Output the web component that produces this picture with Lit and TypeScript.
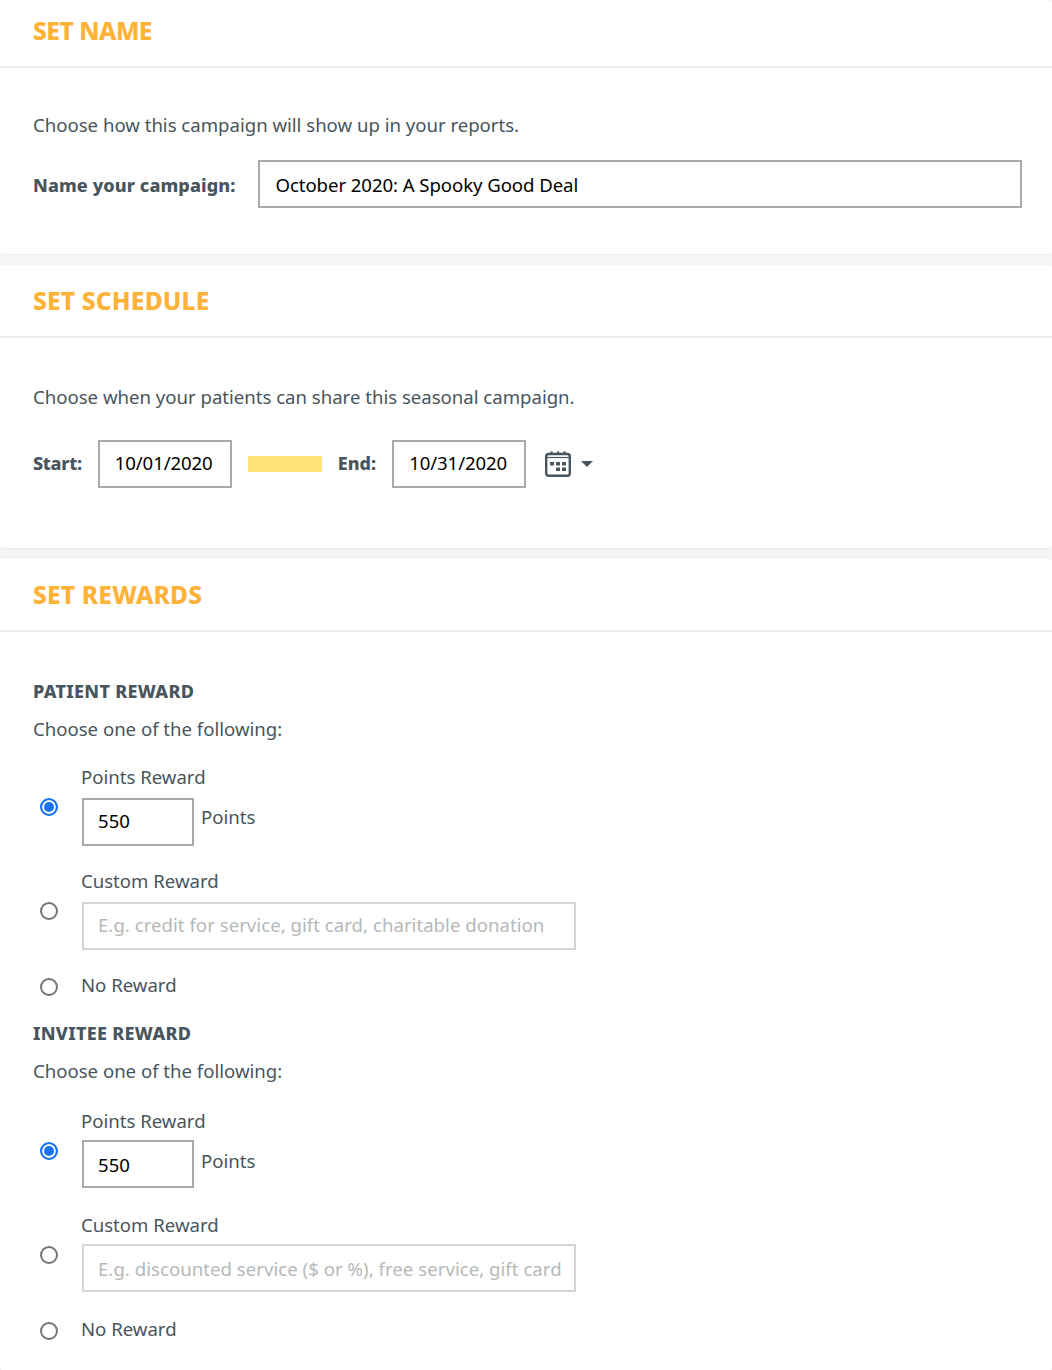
import { LitElement, html, css } from "lit";
import { customElement } from "lit/decorators.js";

@customElement("app-root")
export class AppRoot extends LitElement {
  static styles = css`
    :host {
      display: block;
      width: 1052px;
      height: 1370px;
      overflow: hidden;
      background: #f5f5f5;
      font-family: "Noto Sans", sans-serif;
      font-size: 18.6px;
      letter-spacing: -0.01px;
      line-height: 24px;
      color: #48555c;
    }
    .section {
      background: #fff;
      border-radius: 3px;
      box-shadow: 0 1px 0 #eee;
      margin-bottom: 11px;
    }
    .section.last { margin-bottom: 0; height: 811px; }
    .head {
      box-sizing: border-box;
      border-bottom: 2px solid #eee;
      height: 73px;
      padding: 20px 33px 0;
      font-size: 24.6px;
      line-height: 32px;
      font-weight: 800;
      letter-spacing: 0.15px;
      color: #ffb238;
    }
    .head.first { height: 68px; padding-top: 15px; letter-spacing: -0.5px; }
    .body { padding: 0 30px 0 33px; }
    .b1 { padding-top: 45px; height: 186px; box-sizing: border-box; }
    .b2 { padding-top: 47px; height: 210px; box-sizing: border-box; }
    .b3 { padding-top: 47px; }
    p { margin: 0; }
    .row { display: flex; align-items: center; }
    .r1 { margin-top: 23px; }
    .r2 { margin-top: 31px; }
    .strong { font-weight: 800; letter-spacing: 0.1px; font-size: 18px; }
    .r1 .strong { margin-top: 2px; }
    .r2 .strong { letter-spacing: -0.3px; margin-bottom: 2px; }
    .r2 .end { letter-spacing: 0; }
    input {
      box-sizing: border-box;
      height: 48px;
      border: 2px solid #aaa;
      border-radius: 0;
      background: #fff;
      padding: 0 15px;
      margin: 0;
      font: inherit;
      letter-spacing: inherit;
      color: #000;
      outline: none;
    }
    input::placeholder { color: #b5b9bb; opacity: 1; letter-spacing: 0.03px; }
    .light { border-color: #d4d4d4; padding-left: 14px; padding-right: 0; }
    .name { margin-left: 23px; flex: 1; letter-spacing: -0.07px; }
    .date { width: 134px; margin-left: 16px; padding-left: 15px; padding-bottom: 4px; letter-spacing: -0.1px; }
    .bar { width: 74px; height: 16px; margin-left: 16px; background: #ffe27a; }
    .end { margin-left: 16px; }
    .cal { margin-left: 18px; display: block; }
    .caret {
      margin-left: 9px;
      width: 0;
      height: 0;
      border-left: 6px solid transparent;
      border-right: 6px solid transparent;
      border-top: 6px solid #48555c;
    }
    .group { font-size: 18px; font-weight: 800; text-transform: uppercase; letter-spacing: 0.3px; }
    .choose { margin-top: 14px; }
    .opt { display: flex; align-items: center; margin-top: 23px; }
    .radio {
      flex: none;
      box-sizing: border-box;
      width: 18px;
      height: 18px;
      margin: 3px 23px 0 7px;
      border: 2px solid #767676;
      border-radius: 50%;
      background: #fff;
    }
    .radio.on {
      border-color: #1a73f0;
      background: #1a73f0;
      box-shadow: inset 0 0 0 2px #fff;
    }
    .field { margin-top: 9px; margin-left: 1px; display: flex; align-items: flex-start; }
    .field input { padding-bottom: 4px; }
    .pts { width: 112px; padding-left: 14px; }
    .unit { margin: 7px 0 0 7px; }
    .wide { width: 494px; }
    .opt.a { margin-top: 24px; }
    .inv { margin-top: 24px; }
    .g2 .opt.a { margin-top: 26px; }
    .g2 .opt { margin-top: 25px; }
    .g2 .field { margin-top: 7px; }
    .g2 .field input { padding-bottom: 0; }
    .g2 .unit { margin-top: 9px; }
    .g2 .nudge { margin-top: 5px; }
  `;

  private rewardGroup(title: string, placeholder: string, cls: string) {
    return html`
      <div class=${cls}>
        <div class="group">${title}</div>
        <p class="choose">Choose one of the following:</p>
        <div class="opt a">
          <span class="radio on nudge"></span>
          <div>
            <div>Points Reward</div>
            <div class="field">
              <input class="pts" .value=${"550"} />
              <span class="unit">Points</span>
            </div>
          </div>
        </div>
        <div class="opt">
          <span class="radio nudge"></span>
          <div>
            <div>Custom Reward</div>
            <div class="field">
              <input class="wide light" placeholder=${placeholder} />
            </div>
          </div>
        </div>
        <div class="opt">
          <span class="radio"></span>
          <div>No Reward</div>
        </div>
      </div>
    `;
  }

  render() {
    return html`
      <div class="section">
        <div class="head first">SET NAME</div>
        <div class="body b1">
          <p>Choose how this campaign will show up in your reports.</p>
          <div class="row r1">
            <span class="strong">Name your campaign:</span>
            <input class="name" .value=${"October 2020: A Spooky Good Deal"} />
          </div>
        </div>
      </div>
      <div class="section">
        <div class="head">SET SCHEDULE</div>
        <div class="body b2">
          <p>Choose when your patients can share this seasonal campaign.</p>
          <div class="row r2">
            <span class="strong">Start:</span>
            <input class="date" .value=${"10/01/2020"} />
            <span class="bar"></span>
            <span class="strong end">End:</span>
            <input class="date" .value=${"10/31/2020"} />
            <svg class="cal" width="28" height="28" viewBox="0 0 28 28" fill="none">
              <rect x="2.200" y="4" width="23.600" height="21.800" rx="2.500" stroke="#48555c" stroke-width="2.400"/>
              <path d="M2 7.500h24" stroke="#48555c" stroke-width="1.200"/>
              <path d="M7.500 1.500v3M14 1.500v3M20.500 1.500v3" stroke="#48555c" stroke-width="2.400"/>
              <path d="M6 12h4v3.500H6zM12 12h4v3.500h-4zM18 12h4v3.500h-4zM12 17.500h4v3.500h-4zM18 17.500h4v3.500h-4z" fill="#48555c"/>
            </svg>
            <span class="caret"></span>
          </div>
        </div>
      </div>
      <div class="section last">
        <div class="head">SET REWARDS</div>
        <div class="body b3">
          ${this.rewardGroup("Patient Reward", "E.g. credit for service, gift card, charitable donation", "g1")}
          ${this.rewardGroup("Invitee Reward", "E.g. discounted service ($ or %), free service, gift card", "g2 inv")}
        </div>
      </div>
    `;
  }
}
